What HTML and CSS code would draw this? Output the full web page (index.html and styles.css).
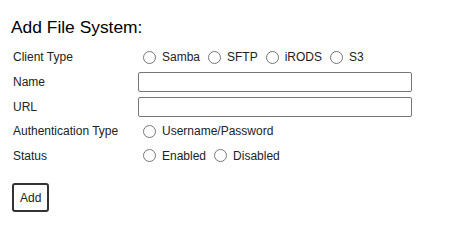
FILE: index.html
```html
<!DOCTYPE html>
<html>
<head>
<meta charset="utf-8">
<link rel="stylesheet" href="styles.css">
</head>
<body>
<div class="page">
  <h2 class="title">Add File System:</h2>
  <form class="form">
    <div class="row radio-row">
      <span class="label">Client Type</span>
      <span class="field">
        <label class="opt"><input type="radio" name="client">Samba</label>
        <label class="opt"><input type="radio" name="client">SFTP</label>
        <label class="opt"><input type="radio" name="client">iRODS</label>
        <label class="opt"><input type="radio" name="client">S3</label>
      </span>
    </div>
    <div class="row input-row">
      <span class="label">Name</span>
      <span class="field"><input type="text" class="text"></span>
    </div>
    <div class="row input-row">
      <span class="label">URL</span>
      <span class="field"><input type="text" class="text"></span>
    </div>
    <div class="row radio-row">
      <span class="label">Authentication Type</span>
      <span class="field">
        <label class="opt"><input type="radio" name="auth">Username/Password</label>
      </span>
    </div>
    <div class="row radio-row status-row">
      <span class="label">Status</span>
      <span class="field">
        <label class="opt"><input type="radio" name="status">Enabled</label>
        <label class="opt"><input type="radio" name="status">Disabled</label>
      </span>
    </div>
    <div class="actions">
      <button type="button" class="btn">Add</button>
    </div>
  </form>
</div>
</body>
</html>
```
FILE: styles.css
```css
html, body {
  margin: 0;
  padding: 0;
  background: #fff;
}
.page {
  padding: 16px 0 0 11px;
  font-family: "Liberation Sans", Arial, sans-serif;
  color: #222;
}
.title {
  margin: 0;
  font-size: 17.4px;
  font-weight: normal;
  line-height: 22px;
  color: #000;
}
.form {
  margin-top: 7px;
  padding-left: 2px;
}
.row {
  display: flex;
  align-items: center;
  font-size: 12px;
}
.radio-row {
  height: 24px;
}
.status-row {
  height: 25px;
}
.input-row {
  height: 25px;
}
.label {
  width: 125px;
  flex: none;
}
.field {
  display: flex;
  align-items: center;
}
.opt {
  display: inline-flex;
  align-items: center;
  margin-right: 3px;
}
.opt input {
  margin: 0 6px 0 5px;
  width: 13px;
  height: 13px;
}
.text {
  width: 274px;
  height: 20px;
  box-sizing: border-box;
  margin: 0;
  border: 1px solid #767676;
  border-radius: 2px;
  padding: 1px 2px;
}
.actions {
  margin-top: 15px;
  margin-left: -1px;
}
.btn {
  font-family: "Liberation Sans", Arial, sans-serif;
  font-size: 12px;
  color: #222;
  background: #fff;
  border: 2px solid #333;
  border-radius: 3px;
  padding: 5px 6px;
  line-height: 14px;
  height: 29px;
}
```
